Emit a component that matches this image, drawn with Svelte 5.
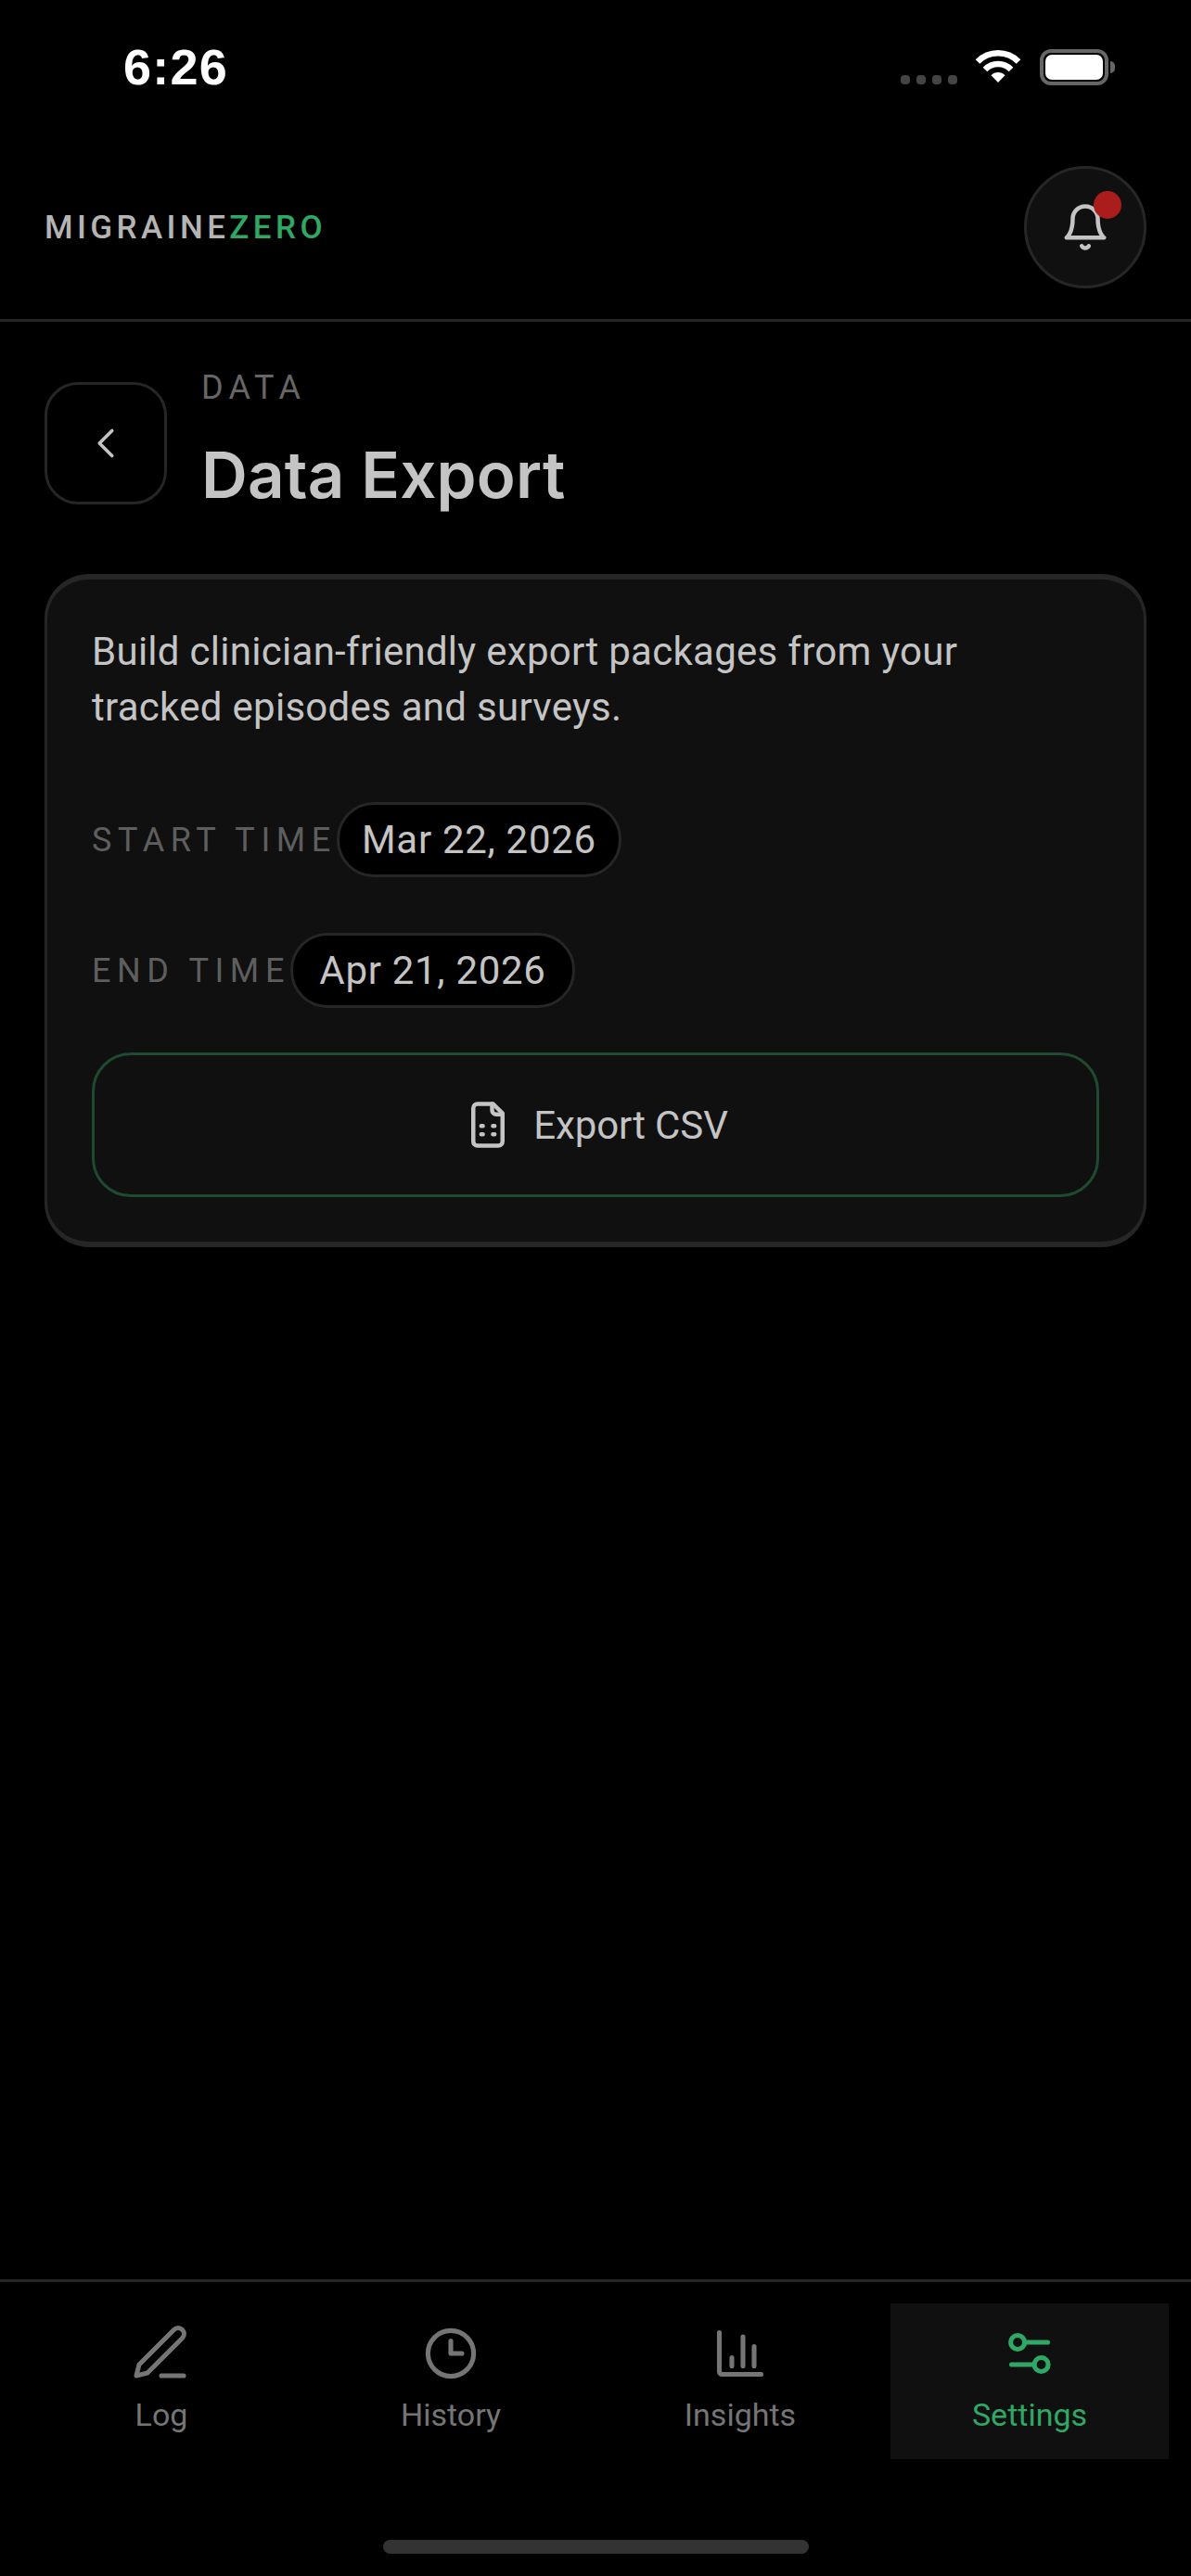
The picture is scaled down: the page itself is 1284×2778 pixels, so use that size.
<script lang="ts">
  const navItems = [
    { label: 'Log', key: 'log' },
    { label: 'History', key: 'history' },
    { label: 'Insights', key: 'insights' },
    { label: 'Settings', key: 'settings' }
  ];
  const dateFields = [
    { label: 'START TIME', value: 'Mar 22, 2026' },
    { label: 'END TIME', value: 'Apr 21, 2026' }
  ];
</script>

<div class="screen">
  <div class="status">
    <span class="status__time">6:26</span>
    <div class="status__right">
      <div class="signal"><i></i><i></i><i></i><i></i></div>
      <svg class="wifi" width="50" height="36" viewBox="0 0 50 36" fill="none" stroke="#fff" stroke-width="6.5">
        <path d="M3 12.5a31 31 0 0 1 44 0" />
        <path d="M11 21a19.500 19.500 0 0 1 28 0" />
        <path d="M25 35l-7.500-7.800a10.500 10.500 0 0 1 15 0Z" fill="#fff" stroke="none" />
      </svg>
      <div class="battery"><div class="battery__fill"></div></div>
    </div>
  </div>

  <header class="topbar">
    <div class="logo">MIGRAINE<span>ZERO</span></div>
    <div class="bell">
      <svg width="54" height="54" viewBox="0 0 24 24" fill="none" stroke="#c4c4c4" stroke-width="2" stroke-linecap="round" stroke-linejoin="round">
        <path d="M6 8a6 6 0 0 1 12 0c0 7 3 9 3 9H3s3-2 3-9" />
        <path d="M10.300 21a1.940 1.940 0 0 0 3.400 0" />
      </svg>
      <span class="bell__dot"></span>
    </div>
  </header>

  <main class="main">
    <div class="pagehead">
      <div class="back">
        <svg width="54" height="54" viewBox="0 0 24 24" fill="none" stroke="#c4c4c4" stroke-width="1.600" stroke-linecap="round" stroke-linejoin="round">
          <path d="M15 18l-6-6 6-6" />
        </svg>
      </div>
      <div class="pagehead__text">
        <div class="eyebrow">DATA</div>
        <h1>Data Export</h1>
      </div>
    </div>

    <section class="card">
      <p>Build clinician-friendly export packages from your tracked episodes and surveys.</p>
      {#each dateFields as f}
        <div class="field">
          <span class="field__label">{f.label}</span>
          <span class="pill">{f.value}</span>
        </div>
      {/each}
      <div class="export">
        <svg width="54" height="54" viewBox="0 0 24 24" fill="none" stroke="#c4c4c4" stroke-width="2" stroke-linecap="round" stroke-linejoin="round">
          <path d="M14.500 2H7a2 2 0 0 0-2 2v16a2 2 0 0 0 2 2h10a2 2 0 0 0 2-2V6.500Z" />
          <path d="M14 2v3a2 2 0 0 0 2 2h3" />
          <path d="M8.800 12.500h.8M14.400 12.500h.8M8.800 16.500h.8M14.400 16.500h.8" />
        </svg>
        <span>Export CSV</span>
      </div>
    </section>
  </main>

  <nav class="nav">
    {#each navItems as item}
      <div class="nav__item" class:nav__item--active={item.key === 'settings'}>
        <svg width="72" height="72" viewBox="0 0 24 24" fill="none" stroke="currentColor" stroke-width="1.700" stroke-linecap="round" stroke-linejoin="round">
          {#if item.key === 'log'}
            <path d="M12 20h8" />
            <path d="M16.500 3.500a2.120 2.120 0 0 1 3 3L7 19l-4 1 1-4Z" />
          {:else if item.key === 'history'}
            <circle cx="12" cy="12" r="8.200" />
            <path d="M12 7.500V12h4" />
          {:else if item.key === 'insights'}
            <path d="M4.500 4.500V18.500a1 1 0 0 0 1 1h14" />
            <path d="M9 13.500v3M13 6v10.500M17 9.500v7" />
          {:else}
            <circle cx="7.700" cy="8" r="2.500" />
            <path d="M10.500 8h8" />
            <circle cx="16.200" cy="16" r="2.500" />
            <path d="M5.500 16h8" />
          {/if}
        </svg>
        <span>{item.label}</span>
      </div>
    {/each}
  </nav>

  <div class="homebar"><div></div></div>
</div>

<style>
  :global(body) {
    background: #000;
  }

  .screen {
    display: flex;
    flex-direction: column;
    height: 2778px;
    background: #000;
    font-family: Roboto, "Noto Sans", sans-serif;
    color: #c4c4c4;
  }

  /* Status bar */
  .status {
    display: flex;
    justify-content: space-between;
    align-items: flex-start;
    height: 150px;
    box-sizing: border-box;
    padding: 42px 89px 0 133px;
  }

  .status__time {
    font-family: "Liberation Sans", sans-serif;
    font-weight: 700;
    font-size: 54px;
    line-height: 60px;
    letter-spacing: 1.200px;
    color: #fff;
  }

  .status__right {
    display: flex;
    align-items: flex-start;
    padding-top: 11px;
  }

  .signal {
    display: flex;
    gap: 7px;
    margin: 28px 19px 0 0;
  }

  .signal i {
    width: 10px;
    height: 10px;
    border-radius: 4px;
    background: #444;
  }

  .wifi {
    margin: 1px 20px 0 0;
  }

  .battery {
    position: relative;
    width: 74px;
    height: 39px;
    box-sizing: border-box;
    border: 4px solid #666;
    border-radius: 12px;
    padding: 2px;
  }

  .battery::after {
    content: '';
    position: absolute;
    right: -11px;
    top: 9px;
    width: 5px;
    height: 13px;
    border-radius: 0 5px 5px 0;
    background: #666;
  }

  .battery__fill {
    height: 100%;
    border-radius: 7px;
    background: #fff;
  }

  /* Top bar */
  .topbar {
    display: flex;
    justify-content: space-between;
    align-items: center;
    padding: 29px 48px 33px;
    border-bottom: 3px solid #262626;
  }

  .logo {
    font-size: 35px;
    font-weight: 500;
    letter-spacing: 4.400px;
    color: #b4b4b4;
  }

  .logo span {
    color: #2fa866;
  }

  .bell {
    position: relative;
    display: flex;
    align-items: center;
    justify-content: center;
    width: 132px;
    height: 132px;
    box-sizing: border-box;
    border: 3px solid #262626;
    border-radius: 50%;
    background: #101010;
  }

  .bell__dot {
    position: absolute;
    top: 24px;
    right: 24px;
    width: 30px;
    height: 30px;
    border-radius: 50%;
    background: #ab1d1d;
  }

  /* Main */
  .main {
    flex: 1;
    padding: 50px 48px 0;
  }

  .pagehead {
    display: flex;
    align-items: center;
    gap: 37px;
  }

  .back {
    display: flex;
    align-items: center;
    justify-content: center;
    flex: none;
    width: 132px;
    height: 132px;
    box-sizing: border-box;
    border: 3px solid #262626;
    border-radius: 36px;
  }

  .pagehead__text {
    padding-bottom: 4px;
  }

  .eyebrow {
    font-size: 36px;
    line-height: 42px;
    letter-spacing: 6.300px;
    color: #666;
  }

  h1 {
    margin: 30px 0 0;
    font-family: Inter, sans-serif;
    font-size: 69px;
    font-weight: 600;
    line-height: 86px;
    letter-spacing: 0.200px;
    color: #c4c4c4;
  }

  .card {
    margin-top: 60px;
    padding: 48px;
    box-sizing: border-box;
    border-style: solid;
    border-color: #262626;
    border-width: 6px 3px;
    border-radius: 48px;
    background: #101010;
  }

  .card p {
    margin: 0;
    max-width: 960px;
    font-size: 42px;
    line-height: 60px;
    letter-spacing: 0.280px;
    color: #c4c4c4;
  }

  .field {
    display: flex;
    align-items: center;
    margin-top: 72px;
  }

  .field + .field {
    margin-top: 60px;
  }

  .field__label {
    font-size: 36px;
    letter-spacing: 6.600px;
    color: #5e5e5e;
  }

  .pill {
    min-width: 307px;
    height: 81px;
    line-height: 75px;
    text-align: center;
    box-sizing: border-box;
    border: 3px solid #262626;
    border-radius: 40px;
    background: #000;
    font-size: 42px;
    letter-spacing: 0.700px;
    color: #c4c4c4;
  }

  .export {
    display: flex;
    align-items: center;
    justify-content: center;
    gap: 22px;
    height: 156px;
    box-sizing: border-box;
    margin-top: 48px;
    border: 3px solid #1f4a30;
    border-radius: 42px;
    font-size: 42px;
    letter-spacing: -0.100px;
    color: #c4c4c4;
  }

  /* Bottom nav */
  .nav {
    display: grid;
    grid-template-columns: repeat(4, 300px);
    gap: 12px;
    padding: 23px 24px 0;
    height: 216px;
    box-sizing: border-box;
    border-top: 3px solid #262626;
  }

  .nav__item {
    display: flex;
    flex-direction: column;
    align-items: center;
    height: 168px;
    padding-top: 18px;
    box-sizing: border-box;
    font-size: 34px;
    line-height: 40px;
    color: #757575;
  }

  .nav__item span {
    margin-top: 10px;
  }

  .nav__item--active {
    background: #101010;
    color: #2fa866;
  }

  .homebar {
    height: 104px;
    box-sizing: border-box;
    padding-top: 65px;
  }

  .homebar div {
    width: 459px;
    height: 15px;
    margin: 0 auto;
    border-radius: 8px;
    background: #333;
  }
</style>
